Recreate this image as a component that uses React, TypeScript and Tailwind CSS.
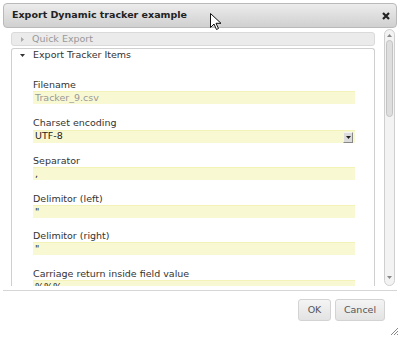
import React from 'react';

const fields: { label: string; value: string; muted?: boolean; select?: boolean }[] = [
  { label: 'Filename', value: 'Tracker_9.csv', muted: true },
  { label: 'Charset encoding', value: 'UTF-8', select: true },
  { label: 'Separator', value: ',' },
  { label: 'Delimitor (left)', value: '"' },
  { label: 'Delimitor (right)', value: '"' },
  { label: 'Carriage return inside field value', value: '%%%' },
];

const Field: React.FC<{ label: string; value: string; muted?: boolean; select?: boolean }> = ({ label, value, muted, select }) => (
  <div className="mb-[12.6px]">
    <div className="h-[12px] leading-[12px] text-[#333]">{label}</div>
    <div
      className={`relative flex items-center w-[322px] h-[13px] bg-[#f8f8d3] border-t border-[#f3f3b8] pl-[2px] ${select ? 'mt-[1px]' : ''} ${muted ? 'text-[#999]' : 'text-[#222]'}`}
    >
      {value}
      {select && (
        <div className="absolute right-[2px] top-[1px] w-[10px] h-[11px] bg-[#dcdcdc] border border-t-[#f4f4f4] border-l-[#f4f4f4] border-r-[#888] border-b-[#888] flex items-center justify-center">
          <svg width="5" height="3" viewBox="0 0 5 3">
            <path d="M0 0h5L2.5 3z" fill="#222" />
          </svg>
        </div>
      )}
    </div>
  </div>
);

const App: React.FC = () => {
  return (
    <div className="w-[400px] h-[337px] bg-white relative overflow-hidden font-['DejaVu_Sans',sans-serif] text-[9.5px]">
      <div className="h-full flex flex-col p-[3px]">
        {/* Title bar */}
        <div className="h-[25px] shrink-0 rounded-[4px] border border-[#b9b9b9] bg-gradient-to-b from-[#ececec] to-[#d0d0d0] flex items-center justify-between pl-[8px] pr-[6px]">
          <span className="font-bold text-[#222]">Export Dynamic tracker example</span>
          <svg width="8" height="8" viewBox="0 0 8 8">
            <path d="M1 1l6 6M7 1L1 7" stroke="#222" strokeWidth="2.2" />
          </svg>
        </div>

        {/* Content + scrollbar */}
        <div className="h-[262px] shrink-0 flex pb-[4px]">
          <div className="flex-1 overflow-hidden pl-[8px] pr-[9px] pt-[4px]">
            <div className="h-[14px] rounded-[3px] border border-[#dadada] bg-[#ebebeb] flex items-center text-[#999]">
              <svg className="ml-[9px] mr-[8px]" width="3" height="5" viewBox="0 0 3 5">
                <path d="M0 0l3 2.5L0 5z" fill="#aaa" />
              </svg>
              Quick Export
            </div>
            <div className="mt-[2px] border border-b-0 border-[#cfcfcf] rounded-t-[3px] h-[400px]">
              <div className="h-[13px] flex items-center text-[#333]">
                <svg className="ml-[8px] mr-[8px]" width="5" height="3" viewBox="0 0 5 3">
                  <path d="M0 0h5L2.5 3z" fill="#333" />
                </svg>
                Export Tracker Items
              </div>
              <div className="pl-[21px] pt-[17px]">
                {fields.map((f) => (
                  <Field key={f.label} {...f} />
                ))}
              </div>
            </div>
          </div>
          {/* Scrollbar */}
          <div className="w-[11px] mr-[2px] mt-[1px] rounded-full border border-[#cfcfcf] bg-[#f3f3f3] flex flex-col items-center">
            <svg className="mt-[4px]" width="5" height="3" viewBox="0 0 5 3">
              <path d="M0 3h5L2.5 0z" fill="#888" />
            </svg>
            <div className="mt-[3px] w-[7px] h-[77px] rounded-full border border-[#c3c3c3] bg-[#dedede]" />
            <div className="flex-1" />
            <svg className="mb-[6px]" width="5" height="3" viewBox="0 0 5 3">
              <path d="M0 0h5L2.5 3z" fill="#888" />
            </svg>
          </div>
        </div>

        {/* Button pane */}
        <div className="flex-1 border-t border-[#d6d6d6] flex justify-end items-start pt-[8px] pr-[12px] gap-[4px]">
          <button className="w-[33px] h-[22px] rounded-[3px] border border-[#d3d3d3] bg-gradient-to-b from-[#f4f4f4] to-[#e3e3e3] text-[#555] leading-none">
            OK
          </button>
          <button className="w-[50px] h-[22px] rounded-[3px] border border-[#d3d3d3] bg-gradient-to-b from-[#f4f4f4] to-[#e3e3e3] text-[#555] leading-none">
            Cancel
          </button>
        </div>
      </div>

      {/* Resize grip */}
      <svg className="absolute right-[2px] bottom-[2px]" width="8" height="8" viewBox="0 0 8 8">
        <path d="M8 1L1 8M8 4L4 8M8 7L7 8" stroke="#888" strokeWidth="1" />
      </svg>

      {/* Mouse cursor */}
      <svg className="absolute left-[210px] top-[13px]" width="12" height="18" viewBox="0 0 12 18">
        <path d="M0.5 0.5v14l3.5-3.5 2.5 5.5 2-1-2.5-5.2h5z" fill="#fff" stroke="#111" strokeWidth="1" strokeLinejoin="round" />
      </svg>
    </div>
  );
};

export default App;
